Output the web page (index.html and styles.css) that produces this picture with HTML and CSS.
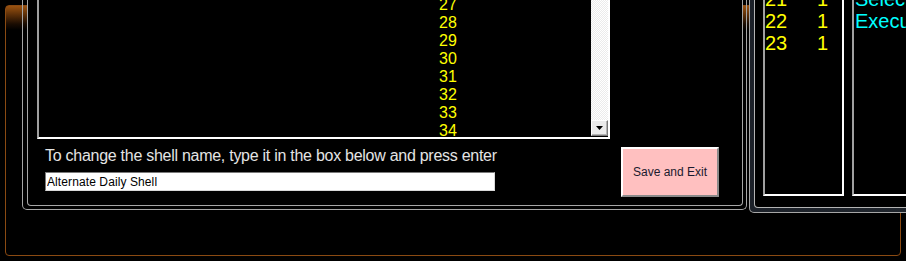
FILE: index.html
```html
<!DOCTYPE html>
<html>
<head>
<meta charset="utf-8">
<link rel="stylesheet" href="styles.css">
</head>
<body>
<div class="frame">
  <div class="panels">
    <div class="lp-outer">
      <div class="lp-inner">
        <div class="listbox">
          <div class="items">
            <div>27</div><div>28</div><div>29</div><div>30</div><div>31</div><div>32</div><div>33</div><div>34</div>
          </div>
          <div class="vscroll">
            <div class="track"></div>
            <div class="sbtn"><svg width="7" height="4" viewBox="0 0 7 4"><path d="M0 0H7L3.5 4Z" fill="#000"/></svg></div>
          </div>
        </div>
        <div class="controls">
          <div class="namebox">
            <div class="label">To change the shell name, type it in the box below and press enter</div>
            <input class="shell-input" type="text" value="Alternate Daily Shell">
          </div>
          <button class="save">Save and Exit</button>
        </div>
      </div>
    </div>
    <div class="rp-outer">
      <div class="rp-inner">
        <div class="nums">
          <div class="row"><span class="c1">21</span><span class="c2">1</span></div>
          <div class="row"><span class="c1">22</span><span class="c2">1</span></div>
          <div class="row"><span class="c1">23</span><span class="c2">1</span></div>
        </div>
        <div class="descs">
          <div class="row">Select Command</div>
          <div class="row">Execute Command</div>
        </div>
      </div>
    </div>
  </div>
</div>
</body>
</html>
```
FILE: styles.css
```css
html, body {
  margin: 0;
  padding: 0;
  background: #000;
  width: 906px;
  height: 261px;
  overflow: hidden;
  font-family: "Liberation Sans", Arial, sans-serif;
}

.frame {
  margin: 5px 0 0 5px;
  width: 896px;
  height: 251px;
  box-sizing: border-box;
  border: 1px solid #8a4a12;
  border-radius: 4px;
  background: linear-gradient(to bottom, #9a5210 0px, #5a2e08 9px, #1a0c02 18px, #000 24px);
}

.panels {
  display: flex;
  align-items: flex-start;
  margin-top: -46px;
  padding-left: 16px;
}

/* left panel */
.lp-outer {
  width: 725px;
  height: 250px;
  box-sizing: border-box;
  border: 1px solid #a6a6a6;
  border-top: none;
  border-radius: 0 0 5px 5px;
  padding: 0 3px 3px 4px;
  flex: none;
}

.lp-inner {
  height: 100%;
  box-sizing: border-box;
  border: 1px solid #a6a6a6;
  border-top: none;
  border-radius: 0 0 4px 4px;
  background: #000;
  display: flex;
  flex-direction: column;
}

.listbox {
  margin-left: 9px;
  width: 573px;
  height: 179px;
  box-sizing: border-box;
  border-left: 2px solid #a0a0a0;
  border-right: 2px solid #fff;
  border-bottom: 2px solid #fff;
  display: flex;
  background: #000;
}

.items {
  flex: 1;
  overflow: hidden;
  padding-left: 400px;
  padding-top: 36px;
  font-size: 16px;
  line-height: 18px;
  color: #ffff00;
}

.vscroll {
  width: 17px;
  display: flex;
  flex-direction: column;
}

.track {
  flex: 1;
  background-color: #f4f4f4;
  background-image: repeating-conic-gradient(#ffffff 0 25%, #ebebeb 0 50%);
  background-size: 2px 2px;
}

.sbtn {
  height: 16px;
  box-sizing: border-box;
  margin-bottom: 1px;
  background: #ececec;
  border-top: 1px solid #fff;
  border-left: 1px solid #fff;
  border-right: 1px solid #7a7a7a;
  border-bottom: 1px solid #7a7a7a;
  box-shadow: inset -1px -1px 0 #b4b4b4;
  display: flex;
  align-items: center;
  justify-content: center;
}

.controls {
  display: flex;
  align-items: flex-start;
  margin-top: 8px;
}

.namebox {
  margin-left: 17px;
  width: 450px;
  display: flex;
  flex-direction: column;
  flex: none;
}

.label {
  white-space: nowrap;
  font-size: 16px;
  letter-spacing: -0.27px;
  line-height: 18px;
  color: #e4e4e4;
}

.shell-input {
  margin: 7px 0 0 0;
  width: 450px;
  height: 19px;
  box-sizing: border-box;
  border: 1px solid;
  border-color: #7a7a7a #d8d8d8 #d8d8d8 #7a7a7a;
  padding: 0 1px;
  font-family: "Liberation Sans", Arial, sans-serif;
  font-size: 12px;
  letter-spacing: 0.1px;
  color: #000;
  background: #fff;
  outline: none;
}

.save {
  margin-left: 126px;
  width: 98px;
  height: 50px;
  box-sizing: border-box;
  background: #ffc0c0;
  border: 2px solid;
  border-color: #ffffff #8a8a8a #8a8a8a #ffffff;
  font-family: "Liberation Sans", Arial, sans-serif;
  font-size: 12px;
  color: #1a1a2e;
  padding: 0;
  flex: none;
}

/* right panel */
.rp-outer {
  margin-left: 2px;
  width: 240px;
  height: 253px;
  box-sizing: border-box;
  border: 1px solid #a6a6a6;
  border-top: none;
  border-radius: 0 0 0 5px;
  padding: 0 4px 4px 4px;
  background: linear-gradient(to right, #1c2129, #22282f);
  flex: none;
}

.rp-inner {
  height: 100%;
  box-sizing: border-box;
  border: 1px solid #b4b4b4;
  border-top: none;
  border-radius: 0 0 0 4px;
  background: #000;
  display: flex;
  align-items: flex-start;
  font-size: 20px;
  line-height: 22px;
}

.nums {
  flex: none;
  margin-left: 8px;
  width: 81px;
  height: 236px;
  box-sizing: border-box;
  border-left: 2px solid #a0a0a0;
  border-right: 2px solid #fff;
  border-bottom: 2px solid #fff;
  padding-top: 28px;
  color: #ffff00;
  overflow: hidden;
}

.nums .row {
  display: flex;
}

.c1 {
  width: 52px;
}

.descs {
  flex: none;
  margin-left: 8px;
  width: 130px;
  height: 236px;
  box-sizing: border-box;
  border-left: 2px solid #a0a0a0;
  border-bottom: 2px solid #fff;
  padding: 28px 0 0 1px;
  color: #00ffff;
  white-space: nowrap;
  overflow: hidden;
}
```
